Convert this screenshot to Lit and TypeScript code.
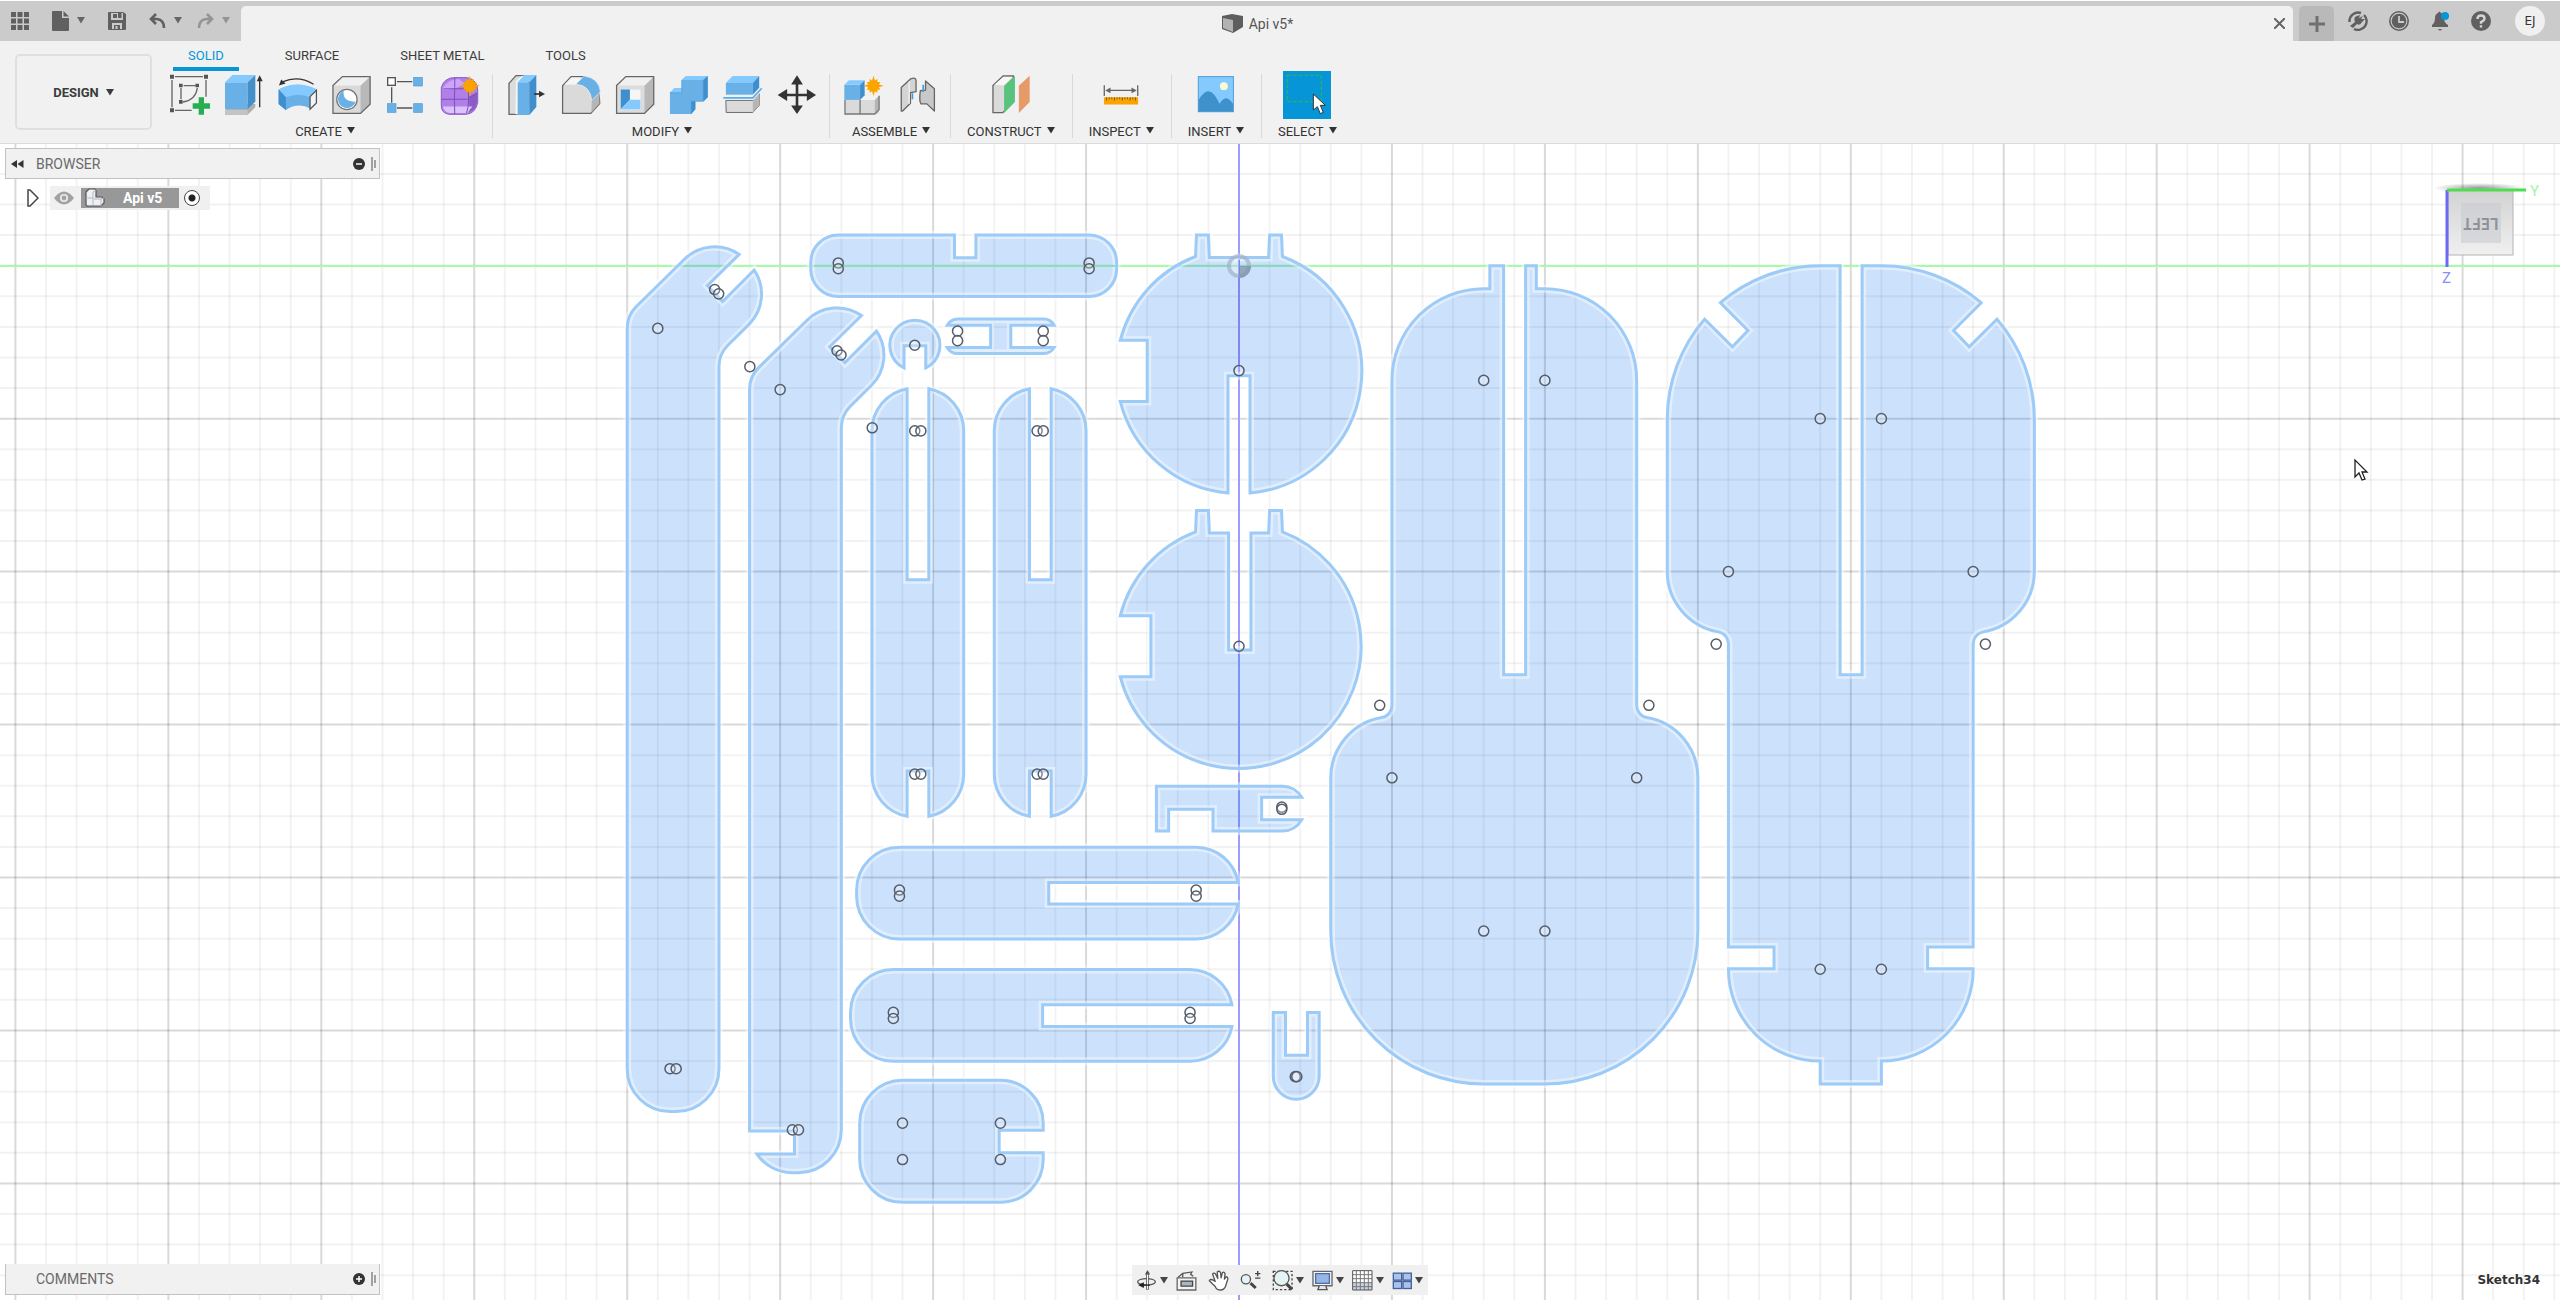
import { LitElement, html, svg, css, SVGTemplateResult } from "lit";
import { customElement, property } from "lit/decorators.js";

type Art = SVGTemplateResult;

/** Wraps artwork in an icon-sized svg. */
const icon = (box: string, w: number, h: number, art: Art) =>
  html`<svg class="icon" viewBox=${box} width=${w} height=${h} aria-hidden="true">${art}</svg>`;

const star = (cx: number, cy: number): Art => {
  const pts: string[] = [];
  for (let i = 0; i < 24; i++) {
    const r = i % 2 ? 17 : i % 6 === 0 ? 31 : 24;
    const a = (i * Math.PI) / 12 - Math.PI / 2;
    pts.push(`${(cx + r * Math.cos(a)).toFixed(1)},${(cy + r * Math.sin(a)).toFixed(1)}`);
  }
  return svg`<polygon points=${pts.join(" ")} fill="#fba400"/>`;
};

const caret = () => html`<svg class="caret" viewBox="0 0 8 7" width="8" height="7" aria-hidden="true"><path d="M0 0H8L4 6.5Z" fill="currentColor"/></svg>`;

/* ---------- toolbar artwork, three units per pixel ---------- */
const art: Record<string, { box: string; art: Art }> = {
  sketch: {
    box: "513 222 120 126",
    art: svg`<g fill="none" stroke="#666" stroke-width="4"><path d="M528 230H612M519 240V322M621 240V290M528 331H578M546 264V298M554 257H588M595 264Q590 300 552 306"/></g>
      <g fill="#555"><path d="M513 224h12v12h-12zM615 224h12v12h-12zM513 325h12v12h-12zM540 251h11v11h-11zM589 251h11v11h-11zM540 300h11v11h-11z"/></g>
      <path d="M599 292h16v18h18v16h-18v18h-16v-18h-18v-16h18z" fill="#27ae50"/>`,
  },
  extrude: {
    box: "675 222 120 126",
    art: svg`<path d="M678 330L700 312H769V322L746 344H678Z" fill="#b0b0b0"/><path d="M678 330H746V344H678Z" fill="#c4c4c4"/>
      <path d="M678 247H746V327H678Z" fill="#69b0e6"/><path d="M678 247L700 225H769L746 247Z" fill="#85caff"/><path d="M746 247L769 225V305L746 327Z" fill="#4390cb"/>
      <path d="M782 322V240" stroke="#333" stroke-width="4"/><path d="M782 226L791 244H773Z" fill="#333"/>`,
  },
  revolve: {
    box: "834 222 126 126",
    art: svg`<path d="M836 268Q895 238 956 268L937 292V328Q897 306 859 332L836 312Z" fill="#69b0e6"/><path d="M836 268Q895 236 956 268L934 292Q897 276 859 292Z" fill="#85caff"/>
      <path d="M836 268L859 292V333L836 314Z" fill="#3f8fce"/><path d="M935 290L955 270V310L935 330Z" fill="#f4f4f4" stroke="#555" stroke-width="4"/>
      <path d="M850 243Q898 222 946 251" fill="none" stroke="#333" stroke-width="4"/><path d="M837 255L844 236L858 249Z" fill="#333"/>`,
  },
  hole: {
    box: "996 222 126 126",
    art: svg`<path d="M999 255L1029 227H1116V314L1086 343H999Z" fill="#dadada"/><path d="M1086 255L1116 227V314L1086 343Z" fill="#b8b8b8"/><path d="M999 255L1029 227H1116L1086 255Z" fill="#f0f0f0"/>
      <path d="M999 255L1029 227H1116V314L1086 343H999Z" fill="none" stroke="#666" stroke-width="4"/><circle cx="1043" cy="299" r="32" fill="#fff" stroke="#777" stroke-width="4"/>
      <path d="M1033 272Q1028 306 1070 306A28 28 0 1 1 1033 272Z" fill="#69b0e6"/>`,
  },
  pattern: {
    box: "1155 222 120 126",
    art: svg`<path d="M1188 245H1234M1172 262V308M1188 324H1234" stroke="#555" stroke-width="4"/><rect x="1160" y="233" width="23" height="23" fill="#fff" stroke="#555" stroke-width="4"/>
      <g fill="#69b0e6" stroke="#4c9bd8" stroke-width="2"><rect x="1238" y="232" width="26" height="26"/><rect x="1159" y="311" width="26" height="26"/><rect x="1238" y="311" width="26" height="26"/></g>`,
  },
  form: {
    box: "1317 222 122 126",
    art: svg`<path d="M1321 262Q1330 232 1362 232H1400Q1432 240 1432 270V308Q1425 342 1396 344H1344Q1320 340 1321 316Z" fill="#b07fe8" stroke="#8a5bc8" stroke-width="3"/>
      <path d="M1326 262Q1345 236 1374 236L1392 250Q1376 264 1334 270Z" fill="#cfa2fb"/><path d="M1406 290L1430 276V308Q1426 330 1406 338Z" fill="#8c5cc6"/>
      <path d="M1326 320H1416L1400 340H1346Q1328 336 1326 320Z" fill="#dcc2fa"/><path d="M1321 298H1400L1430 280M1362 232V262Q1360 300 1362 344M1330 266H1402Q1408 310 1398 340" fill="none" stroke="#7c4db8" stroke-width="3"/>${star(1408, 257)}`,
  },
  press: {
    box: "81 222 120 126",
    art: svg`<path d="M87 250L108 227H146V322L126 343H87Z" fill="#dcdcdc" stroke="#666" stroke-width="4"/><path d="M108 243L126 227H140L116 246V343H106Z" fill="#f5f5f5"/>
      <path d="M113 247H148V345H113Z" fill="#69b0e6"/><path d="M113 247L133 225H169L148 247Z" fill="#85caff"/><path d="M148 247L169 225V321L148 345Z" fill="#3f8fce"/>
      <path d="M162 282H182" stroke="#333" stroke-width="5"/><path d="M195 282L177 272V292Z" fill="#333"/>`,
  },
  fillet: {
    box: "240 222 126 126",
    art: svg`<path d="M245 256L272 227H310Q362 245 362 312L334 343H245Z" fill="#dadada" stroke="#666" stroke-width="4"/><path d="M250 253L273 230H305L288 252Z" fill="#f6f6f6"/>
      <path d="M337 300L361 280V311L336 340Z" fill="#b5b5b5"/><path d="M287 251L313 225Q360 232 364 275L337 302Q332 254 287 251Z" fill="#69b0e6" stroke="#f1f1f1" stroke-width="2"/>`,
  },
  shell: {
    box: "402 222 126 126",
    art: svg`<path d="M407 255L436 227H524V314L495 343H407Z" fill="#dcdcdc"/><path d="M495 255L524 227V314L495 343Z" fill="#b8b8b8"/><path d="M407 255L436 227H524L495 255Z" fill="#f0f0f0"/>
      <path d="M407 255L436 227H524V314L495 343H407Z" fill="none" stroke="#666" stroke-width="4"/><path d="M420 268H482V330H420Z" fill="#f6f6f6"/>
      <path d="M420 268H449V300L420 330Z" fill="#3f8fce"/><path d="M449 300H482V330H420Z" fill="#85caff"/>`,
  },
  combine: {
    box: "564 222 126 126",
    art: svg`<path d="M567 278L582 263H604V238L618 225H686V292L674 305H647V330L634 345H567Z" fill="#69b0e6"/><path d="M604 238L618 225H686L672 238ZM567 278L582 263H604V278Z" fill="#85caff"/>
      <path d="M672 238L686 225V292L672 305ZM634 305H647V330L634 345Z" fill="#3f8fce"/><path d="M567 278H604V238M634 345V305H672V238" fill="none" stroke="#4b9bd8" stroke-width="2"/>`,
  },
  split: {
    box: "726 222 126 126",
    art: svg`<path d="M735 302H820L840 280V318L820 340H736Z" fill="#dadada" stroke="#666" stroke-width="3"/><path d="M820 302L840 284V318L820 340Z" fill="#b5b5b5"/>
      <path d="M735 247H820V284H735Z" fill="#69b0e6"/><path d="M735 247L756 225H840L820 247Z" fill="#85caff"/><path d="M820 247L840 225V262L820 284Z" fill="#3f8fce"/>
      <path d="M727 294H820L848 264" fill="none" stroke="#f1f1f1" stroke-width="12"/><path d="M727 294H820L848 264" fill="none" stroke="#55adf0" stroke-width="5"/>`,
  },
  move: {
    box: "888 222 122 126",
    art: svg`<path d="M949 244V326M908 285H990" stroke="#333" stroke-width="8"/><path d="M949 225L967 253H931ZM949 343L967 317H931ZM890 285L919 267V303ZM1007 285L979 267V303Z" fill="#333"/>`,
  },
  component: {
    box: "1089 222 122 126",
    art: svg`<path d="M1092 300H1195V343H1092Z" fill="#dadada"/><path d="M1138 300L1152 287H1196L1183 300Z" fill="#f3f3f3"/><path d="M1183 300L1196 287V330L1183 343Z" fill="#b5b5b5"/>
      <path d="M1092 300V343H1183L1196 330V287M1138 300V343" fill="none" stroke="#777" stroke-width="4"/><path d="M1090 254H1138V300H1090Z" fill="#69b0e6"/><path d="M1090 254L1104 240H1152L1138 254Z" fill="#85caff"/>
      <path d="M1138 254L1152 240V286L1138 300Z" fill="#3f8fce"/>${star(1179, 257)}`,
  },
  joint: {
    box: "1252 222 122 126",
    art: svg`<g stroke="#666" stroke-width="4" stroke-linejoin="round"><path d="M1262 262L1290 236Q1306 230 1307 240V275L1290 278V310L1266 334H1262Z" fill="#d4d4d4"/><path d="M1336 242L1363 266V334L1340 312H1322Q1316 304 1320 272L1336 270Z" fill="#c8c8c8"/></g>
      <path d="M1286 244V312" stroke="#f2f2f2" stroke-width="4"/><path d="M1296 280V298M1329 254V276" stroke="#3d9be0" stroke-width="5"/>`,
  },
  construct: {
    box: "216 222 122 126",
    art: svg`<path d="M222 256L253 227H284V305L252 339H222Z" fill="#dadada" stroke="#666" stroke-width="4"/><path d="M226 254L254 229H282L256 256Z" fill="#f6f6f6"/>
      <path d="M256 257L289 226V306L256 340Z" fill="#58c37c"/><path d="M301 257L334 226V306L301 340Z" fill="#e59a68"/>`,
  },
  inspect: {
    box: "550 222 122 126",
    art: svg`<path d="M560 255V288M662 255V288M570 271H652" stroke="#666" stroke-width="4"/><path d="M563 271L579 262V280ZM659 271L643 262V280Z" fill="#666"/>
      <rect x="559" y="292" width="104" height="22" fill="#fba400"/><path d="M567 292v10M575 292v6M583 292v6M591 292v10M599 292v6M607 292v6M615 292v10M623 292v6M631 292v6M639 292v10M647 292v6M655 292v10" stroke="#7a5a12" stroke-width="3"/>`,
  },
  insert: {
    box: "826 222 122 126",
    art: svg`<rect x="833" y="229" width="107" height="107" fill="#85caff" stroke="#4a9bd6" stroke-width="3"/><circle cx="911" cy="258" r="12" fill="#fbfbd2"/>
      <path d="M834 300Q850 272 866 274Q880 274 898 312Q912 288 926 298Q934 304 939 312V335H834Z" fill="#3d92cc"/>`,
  },
  select: {
    box: "1087 213 144 144",
    art: svg`<rect x="1087" y="213" width="144" height="144" fill="#0696d7"/><rect x="1100" y="226" width="102" height="79" fill="none" stroke="#2fb060" stroke-width="4" stroke-dasharray="11 6"/>
      <path d="M1178 282V330L1190 320L1199 341L1208 337L1199 316H1214Z" fill="#fff" stroke="#333" stroke-width="3"/>`,
  },
};

/* ---------- navigation bar artwork ---------- */
const nav: { name: string; box: string; w: number; drop: boolean; art: Art }[] = [
  {
    name: "Orbit", box: "103 88 62 64", w: 21, drop: true,
    art: svg`<ellipse cx="134" cy="124" rx="27" ry="10" fill="none" stroke="#555" stroke-width="4"/><path d="M137 94V148" stroke="#555" stroke-width="8"/><path d="M137 98V146" stroke="#fff" stroke-width="3"/><path d="M137 88L145 102H129Z" fill="#555"/><path d="M108 134L126 125V143Z" fill="#222"/><path d="M122 134H144" stroke="#222" stroke-width="4"/>`,
  },
  {
    name: "Look At", box: "226 88 63 64", w: 21, drop: false,
    art: svg`<path d="M229 112H286V149H229Z" fill="#f3f3f3" stroke="#666" stroke-width="4"/><path d="M241 122H276V137H241Z" fill="#aab6c4" stroke="#444" stroke-width="4"/><path d="M232 110L246 98L274 94L270 101L278 107M246 98V110" fill="none" stroke="#555" stroke-width="4"/>`,
  },
  {
    name: "Pan", box: "325 88 62 64", w: 21, drop: false,
    art: svg`<path d="M346 138L328 121Q331 114 340 119L346 123L338 100Q343 94 348 102L354 114L352 94Q358 89 362 95L364 112L368 96Q374 92 376 100L374 116L380 108Q386 110 384 117L378 136Q374 149 362 149Q350 149 346 138Z" fill="#fff" stroke="#555" stroke-width="4" stroke-linejoin="round"/>`,
  },
  {
    name: "Zoom", box: "420 88 64 64", w: 21, drop: false,
    art: svg`<circle cx="438" cy="116" r="14" fill="#e4f4f4" stroke="#555" stroke-width="4"/><path d="M452 128L468 143" stroke="#444" stroke-width="9"/><path d="M466 99H482M474 91V107M466 113H482" stroke="#444" stroke-width="4"/>`,
  },
  {
    name: "Fit", box: "517 88 64 64", w: 21, drop: true,
    art: svg`<rect x="521" y="92" width="57" height="56" fill="none" stroke="#444" stroke-width="4" stroke-dasharray="7 6"/><circle cx="546" cy="113" r="23" fill="#e4f4f4" stroke="#555" stroke-width="4"/><path d="M562 131L578 147" stroke="#444" stroke-width="9"/>`,
  },
  {
    name: "Display Settings", box: "642 88 64 64", w: 21, drop: true,
    art: svg`<path d="M645 92H703V136H645Z" fill="#f6f6f6" stroke="#666" stroke-width="4"/><path d="M653 99H695V129H653Z" fill="#96b6e6" stroke="#4c6ea8" stroke-width="4"/><path d="M664 137L660 148H688L684 137" fill="#e6e6e6" stroke="#555" stroke-width="4"/>`,
  },
  {
    name: "Grid and Snaps", box: "759 88 63 63", w: 21, drop: true,
    art: svg`<path d="M761 90H819V148H761Z" fill="#fff"/><path d="M761 126H819V148H761Z" fill="#c9d3e2"/><path d="M772 91V148M784 91V148M796 91V148M808 91V148M761 102H819M761 114H819M761 126H819M761 138H819" stroke="#777" stroke-width="3"/><path d="M761 90H819V148H761Z" fill="none" stroke="#555" stroke-width="3"/>`,
  },
  {
    name: "Viewports", box: "874 88 60 60", w: 20, drop: true,
    art: svg`<g fill="#a9c3ec" stroke="#46629a" stroke-width="4"><rect x="878" y="96" width="25" height="21"/><rect x="907" y="96" width="25" height="21"/><rect x="878" y="121" width="25" height="21"/><rect x="907" y="121" width="25" height="21"/></g>`,
  },
];

/* ---------- sketch geometry, in millimetres from the origin ---------- */
const slotBar =
  "M-108.5 40.2V102.7H-101.4V40.2A14 14 0 0 1 -90 54V166.2A14 14 0 0 1 -101.4 180V165.2H-108.5V180A14 14 0 0 1 -120 166.2V54A14 14 0 0 1 -108.5 40.2Z";
const forkBar =
  "M-125 204.1A14 14 0 0 1 -111 190.1H-14A14 14 0 0 1 -.3 201.6H-62.2V208.7H-.3A14 14 0 0 1 -14 220.1H-111A14 14 0 0 1 -125 206.1Z";
const hook =
  "V20.5A10 10 0 0 1 -197.1 13.4L-181.3 -2.1A14 14 0 0 1 -163.4 -3.7L-173.8 6.5L-168.8 11.7L-158.5 1.4A14 14 0 0 1 -160.1 19.1L-167.1 26A10 10 0 0 0 -170 33V";

const parts: { d: string; dx?: number; dy?: number }[] = [
  { d: `M-200 262.5${hook}262.5A14 14 0 0 1 -184 276.5H-186A14 14 0 0 1 -200 262.5Z` },
  { d: `M-200 262.9${hook}262.5A14 14 0 0 1 -184 276.5H-186A14 14 0 0 1 -197.6 270.4H-185.3V262.9Z`, dx: 40, dy: 20 },
  { d: "M-131 -10H-93V-2.6H-86V-10H-49A9 9 0 0 1 -40 -1V1A9 9 0 0 1 -49 10.1H-131A9 9 0 0 1 -140 1V-1A9 9 0 0 1 -131 -10Z" },
  { d: "M-109.5 33.4V26.2H-102.4V33.4A8.2 8.2 0 1 0 -109.5 33.4Z" },
  { d: "M-95.4 19.5A4 4 0 0 1 -92 17.4H-64A4 4 0 0 1 -60.4 19.5H-74.6V26.7H-60.4A4 4 0 0 1 -64 28.7H-92A4 4 0 0 1 -95.4 26.7H-81.2V19.5Z" },
  { d: slotBar },
  { d: slotBar, dx: 40 },
  { d: "M-14.2 -3L-13.9 -10H-10L-9.7 -2.7H9.7L10 -10H13.9L14.2 -3A40 40 0 0 1 3.6 74.3V36H-3.6V74.3A40 40 0 0 1 -38.8 44.4H-30V24.4H-38.8A40 40 0 0 1 -14.2 -3Z" },
  { d: "M-14.2 87L-13.9 80H-10L-9.7 87.4H-3.4V125.6H3.9V87.4H9.7L10 80H13.9L14.2 87A40 40 0 1 1 -38.8 134.4H-28.8V114.4H-38.8A40 40 0 0 1 -14.2 87Z" },
  { d: "M-27 170.2H14.2A7.2 7.2 0 0 1 20.5 173.8H7.4V181.1H20.5A7.2 7.2 0 0 1 14.2 184.8H-8.5V177.7H-23V184.8H-27Z" },
  { d: forkBar },
  { d: forkBar, dx: -2, dy: 40 },
  { d: "M-110 266.3H-78A14 14 0 0 1 -64 280.3V282.6H-78.4V290H-64V292.2A14 14 0 0 1 -78 306.2H-110A14 14 0 0 1 -124 292.2V280.3A14 14 0 0 1 -110 266.3Z" },
  { d: "M11.2 244.1H15.2V258.1H22.4V244.1H26.2V265A7.5 7.5 0 0 1 11.2 265Z" },
  { d: "M82 7.5V0H86.5V133.7H93.7V0H97.2V7.5H100A30 30 0 0 1 130 37.5V143.7A4 4 0 0 0 133.3 147.7A20 20 0 0 1 150 167.4V217.5A50 50 0 0 1 100 267.5H80A50 50 0 0 1 30 217.5V167.4A20 20 0 0 1 46.7 147.7A4 4 0 0 0 50 143.7V37.5A30 30 0 0 1 80 7.5Z" },
  { d: "M190 0H196.5V133.7H203.7V0H210A50 50 0 0 1 242.6 12.1L233.6 21.2L238.7 26.5L247.8 17.5A50 50 0 0 1 260 50V100A20 20 0 0 1 243.3 119.7A4 4 0 0 0 240 123.7V222.7H225.1V229.8H240A30 30 0 0 1 210 260V267.5H190V260A30 30 0 0 1 160 229.8H174.9V222.7H160V123.7A4 4 0 0 0 156.7 119.7A20 20 0 0 1 140 100V50A50 50 0 0 1 152.2 17.5L161.3 26.5L166.4 21.2L157.4 12.1A50 50 0 0 1 190 0Z" },
];

const points: [number, number][] = [
  [-190, 20.5], [-171.4, 7.8], [-170.1, 9.2], [-159.9, 33], [-150, 40.5], [-131.4, 27.8], [-130.1, 29.2], [-119.9, 53],
  [-131, -0.9], [-131, 1], [-49, -0.9], [-49, 1], [-106, 26], [-92, 21.4], [-92, 24.5], [-64, 21.4], [-64, 24.5],
  [-106, 54], [-104, 54], [-66, 54], [-64, 54], [-106, 166.2], [-104, 166.2], [-66, 166.2], [-64, 166.2],
  [0, 34.3], [0, 124.4], [14, 177], [14, 177.7], [-111, 204.1], [-111, 206.1], [-14, 204.1], [-14, 206.1],
  [-113, 244.1], [-113, 246.1], [-16, 244.1], [-16, 246.1], [-186, 262.5], [-184, 262.5], [-146, 282.5], [-144, 282.5],
  [-110, 280.3], [-78, 280.3], [-110, 292.2], [-78, 292.2], [18.4, 265.1], [18.9, 265.1],
  [80, 37.5], [100, 37.5], [46, 143.7], [134, 143.7], [50, 167.4], [130, 167.4], [80, 217.5], [100, 217.5],
  [190, 50], [210, 50], [160, 100], [240, 100], [156, 123.7], [244, 123.7], [190, 230], [210, 230],
];

const range = (a: number, b: number) => Array.from({ length: b - a + 1 }, (_, i) => a + i);

@customElement("sketch-canvas")
class SketchCanvas extends LitElement {
  static styles = css`
    :host { display: block; }
    svg { display: block; width: 100%; height: 100%; }
    .minor { stroke: rgba(0, 0, 0, 0.05); stroke-width: 2; }
    .major { stroke: rgba(0, 0, 0, 0.15); stroke-width: 2; }
    .axis-y { stroke: #a6faa8; stroke-width: 2; }
    .axis-z { stroke: #9c9cfc; stroke-width: 2; }
    path, circle { vector-effect: non-scaling-stroke; }
    .body { fill: rgba(0, 105, 240, 0.2); }
    .halo { fill: none; stroke: rgba(255, 255, 255, 0.45); stroke-width: 8; }
    .edge { fill: none; stroke: #9ccbf8; stroke-width: 3; }
    .point { fill: rgba(255, 255, 255, 0.25); stroke: #555d6a; stroke-width: 1.5; }
    .label { font: 15px Roboto, sans-serif; }
    .face { font: bold 15px "DejaVu Sans Mono", monospace; fill: #8f9398; }
  `;

  render() {
    const step = 30.59;
    return html`<svg viewBox="0 144 2560 1156" preserveAspectRatio="xMidYMin slice" role="img" aria-label="Sketch canvas">
      <defs>
        <linearGradient id="cube" x1="0" y1="0" x2="0" y2="1"><stop offset="0" stop-color="#d2d2d2"/><stop offset="1" stop-color="#f0f0f0"/></linearGradient>
        <radialGradient id="shade"><stop offset="0" stop-color="#000" stop-opacity=".4"/><stop offset="1" stop-color="#000" stop-opacity="0"/></radialGradient>
      </defs>
      ${range(-40, 43).map((k) => svg`<line class=${k % 5 ? "minor" : "major"} x1=${1239 + k * step} x2=${1239 + k * step} y1="144" y2="1300"/>`)}
      ${range(-3, 33).map((k) => svg`<line class=${k % 5 ? "minor" : "major"} y1=${265.7 + k * step} y2=${265.7 + k * step} x1="0" x2="2560"/>`)}
      <line class="axis-y" x1="0" x2="2560" y1="266" y2="266"/>
      <line class="axis-z" x1="1239" x2="1239" y1="144" y2="1300"/>
      <g transform="translate(1239 265.7) scale(3.059)">
        ${parts.map((p) => svg`<g transform="translate(${p.dx ?? 0} ${p.dy ?? 0})"><path class="body" d=${p.d}/><path class="halo" d=${p.d}/><path class="edge" d=${p.d}/></g>`)}
      </g>
      <line x1="814" x2="1115" y1="266" y2="266" stroke="#8be0b4" stroke-width="2"/>
      <line x1="1239" x2="1239" y1="260" y2="372" stroke="#8484f2" stroke-width="2"/>
      <g transform="translate(1239 266)">
        <circle r="10" fill="none" stroke="#9fb2c8" stroke-opacity=".7" stroke-width="4"/>
        <path d="M0 0H12A12 12 0 0 1 0 12Z" fill="#7b8fa8" fill-opacity=".7"/>
        <path d="M0 0H-8A8 8 0 0 1 0 -8ZM0 0V8A8 8 0 0 1 -8 0Z" fill="#fff" fill-opacity=".3"/>
      </g>
      <g transform="translate(1239 265.7) scale(3.059)">
        ${points.map(([x, y]) => svg`<circle class="point" cx=${x} cy=${y} r="1.65"/>`)}
      </g>
      <ellipse cx="2479" cy="188" rx="46" ry="5" fill="url(#shade)"/>
      <rect x="2448" y="190" width="65" height="65" fill="url(#cube)" stroke="#b4b4b4"/>
      <rect x="2461" y="203" width="40" height="40" fill="#c9ccd2" fill-opacity=".6"/>
      <text class="face" text-anchor="middle" transform="rotate(180 2481 223)" x="2481" y="228">LEFT</text>
      <path d="M2447 190V267" stroke="#6a6af5" stroke-width="3"/><path d="M2447 190H2526" stroke="#4fdc4f" stroke-width="3"/>
      <text class="label" x="2530" y="196" fill="#a4f4a4" font-weight="bold">Y</text>
      <text class="label" x="2442" y="283" fill="#8c8cf8" font-weight="bold">Z</text>
      <path d="M2355 460V477L2359 473L2362 480L2365 479L2362 472H2367Z" fill="#fff" stroke="#222" stroke-width="1.3"/>
    </svg>`;
  }
}

@customElement("tool-group")
class ToolGroup extends LitElement {
  @property() label = "";
  @property({ attribute: false }) tools: string[] = [];

  static styles = css`
    :host { display: flex; flex-direction: column; align-items: center; padding: 0 17px 0 16px; border-right: 1px solid #d9d9d9; height: 64px; }
    :host([wide]) { padding: 0 12px 0 14px; }
    :host([last]) { border-right: 0; }
    .row { display: flex; gap: 14px; align-items: center; height: 42px; }
    button { display: flex; align-items: center; justify-content: center; border: 0; padding: 0; background: none; color: #333; font: 13px/16px Roboto, "Liberation Sans", sans-serif; }
    .tool { width: 40px; height: 42px; }
    .name { gap: 5px; margin-top: 8px; white-space: nowrap; }
    .icon { flex: none; }
    .caret { margin-top: -3px; }
  `;

  render() {
    return html`<div class="row">
        ${this.tools.map((t) => {
          const big = t === "select";
          return html`<button class="tool" aria-label=${t}>${icon(art[t].box, big ? 48 : 40, big ? 48 : 42, art[t].art)}</button>`;
        })}
      </div>
      <button class="name">${this.label}${caret()}</button>`;
  }
}

@customElement("app-root")
class AppRoot extends LitElement {
  static styles = css`
    :host { display: flex; flex-direction: column; height: 100vh; overflow: hidden; background: #fff; color: #3c3c3c; font-family: Roboto, "Liberation Sans", sans-serif; }
    button { border: 0; padding: 0; background: none; color: inherit; font: inherit; display: flex; align-items: center; }
    .icon, .caret { display: block; flex: none; }
    .titlebar { display: flex; height: 40px; margin-top: 1px; background: #cbcbcb; color: #666; }
    .quick { display: flex; align-items: center; gap: 15px; width: 241px; padding-left: 11px; box-sizing: border-box; }
    .quick .pair { gap: 8px; }
    .quick .caret { margin-top: -2px; }
    .grid { margin-right: 8px; }
    .dim { color: #949494; }
    .save { margin: 0 8px; }
    .doc { flex: 1; display: flex; align-items: center; margin-top: 5px; background: #f1f1f1; border-radius: 5px 5px 0 0; padding-right: 8px; }
    .doc-name { flex: 1; display: flex; align-items: center; justify-content: center; gap: 6px; font-size: 14px; color: #555; }
    .right { display: flex; align-items: center; gap: 21px; padding-right: 15px; }
    .new { width: 35px; height: 35px; margin: 5px -7px 0 6px; justify-content: center; background: #b9b9b9; border-radius: 5px 5px 0 0; }
    .avatar { width: 30px; height: 30px; border-radius: 50%; background: #f0f0f0; justify-content: center; font: 12px "DejaVu Sans", sans-serif; color: #333; margin-left: 3px; }
    .ribbon { display: flex; height: 102px; background: #f1f1f1; border-bottom: 1px solid #dcdcdc; }
    .design { width: 137px; height: 76px; margin: 13px 4px 0 15px; box-sizing: border-box; border: 2px solid #dfdfdf; border-radius: 5px; justify-content: center; gap: 7px; font-weight: bold; font-size: 13px; }
    .tabs { display: flex; gap: 31px; margin: 6px 0 0 17px; }
    .tabs button { padding: 0 15px 4px; height: 24px; font-size: 13px; border-bottom: 4px solid transparent; box-sizing: border-box; }
    .tabs .on { color: #0696d7; border-color: #0696d7; }
    .groups { display: flex; margin-top: 3px; }
    .work { flex: 1; min-height: 0; display: grid; }
    .work > * { grid-area: 1 / 1; min-width: 0; min-height: 0; }
    .overlay { position: relative; display: grid; grid-template-columns: 1fr auto 1fr; grid-template-rows: auto auto 1fr; padding: 4px 5px 5px; }
    .panel { grid-column: 1 / -1; justify-self: start; display: flex; align-items: center; width: 375px; height: 31px; box-sizing: border-box; border: 1px solid #c2c2c2; background: #f1f1f1; color: #6a6a6a; font-size: 14px; padding-right: 2px; }
    .panel .title { flex: 1; margin-left: 12px; }
    .panel .title.solo { margin-left: 30px; }
    .panel > .first { margin-left: 5px; }
    .panel .grip { margin-left: 6px; }
    .comments { grid-column: 1; align-self: end; border-top: 0; }
    .tree { grid-column: 1 / -1; justify-self: start; display: flex; align-items: center; margin: 7px 0 0 22px; }
    .node { display: flex; align-items: center; height: 24px; margin-left: 11px; padding: 0 10px 0 4px; gap: 7px; background: #f0f0f0; }
    .chip { display: flex; align-items: center; width: 98px; height: 20px; background: #989898; color: #fff; font-size: 14px; font-weight: bold; gap: 17px; padding-left: 3px; box-sizing: border-box; }
    .node input { appearance: none; margin: 0 0 0 -2px; width: 16px; height: 16px; border: 1px solid #444; border-radius: 50%; background: radial-gradient(circle, #222 3px, #fff 4px); }
    .nav { grid-column: 2; align-self: end; display: flex; align-items: center; gap: 8px; height: 30px; padding: 0 5px 0 4px; background: #f0f0f0; color: #444; }
    .nav button { gap: 3px; }
    .nav .plain { padding-right: 3px; }
    .status { grid-column: 3; align-self: end; justify-self: end; font: bold 12px/16px "DejaVu Sans", sans-serif; color: #333; margin: 0 15px 7px 0; }
  `;

  private knob(plus: boolean) {
    return icon("0 0 12 12", 12, 12, svg`<circle cx="6" cy="6" r="6" fill="#333"/><path d="${plus ? "M3 6H9M6 3V9" : "M3 6H9"}" stroke="#fff" stroke-width="1.5"/>`);
  }

  private grip() {
    return html`<span class="grip">${icon("0 0 6 14", 6, 14, svg`<path d="M1 0V14M4 3V11" stroke="#777" stroke-width="1.3"/>`)}</span>`;
  }

  render() {
    return html`
      <header>
        <div class="titlebar">
          <div class="quick">
            <button class="grid" aria-label="Data panel">${icon("0 0 18 18", 18, 18, svg`<path fill="#606060" d="M0 0h5v5h-5zM6.500 0h5v5h-5zM13 0h5v5h-5zM0 6.500h5v5h-5zM6.500 6.500h5v5h-5zM13 6.500h5v5h-5zM0 13h5v5h-5zM6.500 13h5v5h-5zM13 13h5v5h-5z"/>`)}</button>
            <button class="pair" aria-label="File">${icon("0 0 17 20", 17, 20, svg`<path fill="#606060" d="M1 0H10V7H17V19Q17 20 16 20H1Q0 20 0 19V1Q0 0 1 0ZM11.500 0L17 5.500H11.500Z"/>`)}${caret()}</button>
            <button class="save" aria-label="Save">${icon("0 0 18 18", 18, 18, svg`<path fill="#606060" d="M1 0H15L18 2V17Q18 18 17 18H1Q0 18 0 17V1Q0 0 1 0Z"/><path fill="#cbcbcb" d="M3 1H15V8H3ZM4 11H14V17H4Z"/><path fill="#606060" d="M5 2H9V6H5ZM10 1H13.500V6H10ZM6 13H12V18H6Z"/><path fill="#cbcbcb" d="M7.500 14H9.500V17H7.500Z"/>`)}</button>
            <button class="pair" aria-label="Undo">${icon("0 0 17 16", 17, 16, svg`<path d="M7 1L2 6L7 11M2 6H8Q15 7 15 15" fill="none" stroke="#606060" stroke-width="2.600"/>`)}${caret()}</button>
            <button class="pair dim" aria-label="Redo">${icon("0 0 17 16", 17, 16, svg`<path d="M10 1L15 6L10 11M15 6H9Q2 7 2 15" fill="none" stroke="#949494" stroke-width="2.600"/>`)}${caret()}</button>
          </div>
          <div class="doc">
            <div class="doc-name">${icon("0 0 21 19", 21, 19, svg`<path d="M0 2L10 0L21 2V13L11 19L0 15Z" fill="#5e5e5e"/><path d="M1 4L11 6V18L1 14Z" fill="#b2b2b2"/>`)}<span>Api v5*</span></div>
            <button aria-label="Close">${icon("0 0 11 11", 11, 11, svg`<path d="M0 0L11 11M11 0L0 11" stroke="#666" stroke-width="2"/>`)}</button>
          </div>
          <div class="right">
            <button class="new" aria-label="New design">${icon("0 0 16 16", 16, 16, svg`<path d="M8 0V16M0 8H16" stroke="#707070" stroke-width="3"/>`)}</button>
            <button aria-label="Extensions">${icon("0 0 20 20", 20, 20, svg`<path d="M1.500 11A8.700 8.700 0 0 1 13 2M16 4A8.700 8.700 0 0 1 6 18" fill="none" stroke="#606060" stroke-width="2.400"/><path d="M2 15L7 11Q5 6 9 5L12 4L11 7L15 5L13 8L17 8L14 11Q12 15 9 13L5 17Z" fill="#606060"/>`)}</button>
            <button aria-label="Job status">${icon("0 0 20 20", 20, 20, svg`<circle cx="10" cy="10" r="9.200" fill="none" stroke="#606060" stroke-width="1.600"/><circle cx="10" cy="10" r="7.300" fill="#606060"/><path d="M10 5V11H15" fill="none" stroke="#cbcbcb" stroke-width="1.800"/>`)}</button>
            <button aria-label="Notifications">${icon("0 0 20 20", 20, 20, svg`<path d="M2 16V14Q5 12 5 7Q5 3 8 2Q9 -1 11 2Q14 3 14 7Q14 12 18 14V16ZM8 18H12Q10 21 8 18Z" fill="#606060"/><circle cx="15" cy="5" r="4" fill="#0696d7"/>`)}</button>
            <button aria-label="Help">${icon("0 0 20 20", 20, 20, svg`<circle cx="10" cy="10" r="10" fill="#606060"/><path d="M6.500 8Q6.500 4.500 10 4.500Q13.500 4.500 13.500 7.500Q13.500 9.500 10 11V12.800M10 14.300V16.500" fill="none" stroke="#d4d4d4" stroke-width="2.400"/>`)}</button>
            <button class="avatar">EJ</button>
          </div>
        </div>
        <div class="ribbon">
          <button class="design">DESIGN ${caret()}</button>
          <div>
            <div class="tabs">
              <button class="on">SOLID</button><button>SURFACE</button><button>SHEET METAL</button><button>TOOLS</button>
            </div>
            <div class="groups">
              <tool-group wide label="CREATE" .tools=${["sketch", "extrude", "revolve", "hole", "pattern", "form"]}></tool-group>
              <tool-group wide label="MODIFY" .tools=${["press", "fillet", "shell", "combine", "split", "move"]}></tool-group>
              <tool-group wide label="ASSEMBLE" .tools=${["component", "joint"]}></tool-group>
              <tool-group label="CONSTRUCT" .tools=${["construct"]}></tool-group>
              <tool-group label="INSPECT" .tools=${["inspect"]}></tool-group>
              <tool-group label="INSERT" .tools=${["insert"]}></tool-group>
              <tool-group last label="SELECT" .tools=${["select"]}></tool-group>
            </div>
          </div>
        </div>
      </header>
      <main class="work">
        <sketch-canvas></sketch-canvas>
        <div class="overlay">
          <section class="panel">
            <button class="first" aria-label="Collapse">${icon("0 0 13 8", 13, 8, svg`<path d="M6 0V8L0 4ZM12.500 0V8L6.500 4Z" fill="#333"/>`)}</button>
            <span class="title">BROWSER</span>
            <button aria-label="Hide browser">${this.knob(false)}</button>${this.grip()}
          </section>
          <div class="tree">
            <button aria-label="Expand">${icon("0 0 12 18", 12, 18, svg`<path d="M1 1H3L11 9L3 17H1Z" fill="#fff" stroke="#444" stroke-width="1.500"/>`)}</button>
            <div class="node">
              <button aria-label="Visibility">${icon("0 0 20 14", 20, 14, svg`<path d="M0 7Q10 -6 20 7Q10 20 0 7Z" fill="#a2a2a2"/><circle cx="10" cy="7" r="4" fill="#ececec"/><circle cx="10" cy="7" r="2.400" fill="#a2a2a2"/>`)}</button>
              <div class="chip">${icon("0 0 22 20", 22, 20, svg`<path d="M2 4L5 1H11L12 3V9H18L20 11V15L17 18H3L2 17Z" fill="#eef0f4" stroke="#555" stroke-width="1.200"/><path d="M9 4V17M10 11H17V18M2 10H9M17 11L20 10M9 4L12 2" fill="none" stroke="#b4b8c0"/>`)}<span>Api v5</span></div>
              <input type="radio" name="active" checked aria-label="Activate Api v5" />
            </div>
          </div>
          <section class="panel comments">
            <span class="title solo">COMMENTS</span>
            <button aria-label="Add comment">${this.knob(true)}</button>${this.grip()}
          </section>
          <nav class="nav" aria-label="View controls">
            ${nav.map((n) => html`<button class=${n.drop ? "menu" : "plain"} aria-label=${n.name}>${icon(n.box, n.w, 21, n.art)}${n.drop ? caret() : ""}</button>`)}
          </nav>
          <span class="status">Sketch34</span>
        </div>
      </main>
    `;
  }
}
